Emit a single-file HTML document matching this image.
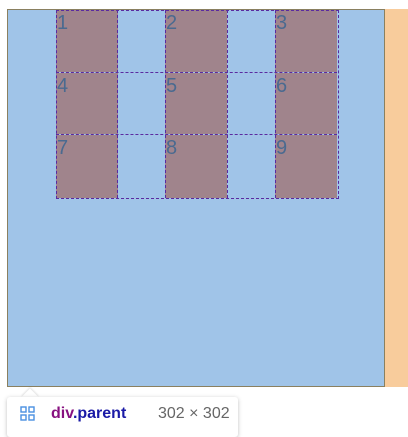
<html><head><style>
body{margin:0;width:408px;height:430px;background:#fff;position:relative;overflow:hidden;font-family:"Liberation Sans","DejaVu Sans",sans-serif}
.p{position:absolute;left:7px;top:9px;width:376px;height:376px;border:1px solid #8a8060;background:#a0c4e8}
.m{position:absolute;left:385px;top:9px;width:23px;height:378px;background:#f8cc9c}
.c{position:absolute;background:#a0848c;color:#4a6a90;font-size:20px;line-height:26px;padding-left:1px;box-sizing:border-box}
.l{position:absolute;border:0 dashed #5a2aa0}
.tip{position:absolute;left:7px;top:397px;width:231px;height:40px;background:#fff;border-radius:3px;box-shadow:0 1px 4px rgba(0,0,0,.25)}
.arr{position:absolute;left:24px;top:391px;width:12px;height:12px;background:#fff;transform:rotate(45deg);box-shadow:-1px -1px 2px rgba(0,0,0,.12)}
</style></head><body>
<div class="p"></div><div class="m"></div>
<div class="c" style="left:56px;top:10px;width:62px;height:62px">1</div>
<div class="c" style="left:165px;top:10px;width:62px;height:62px">2</div>
<div class="c" style="left:275px;top:10px;width:62px;height:62px">3</div>
<div class="c" style="left:56px;top:73px;width:62px;height:61px">4</div>
<div class="c" style="left:165px;top:73px;width:62px;height:61px">5</div>
<div class="c" style="left:275px;top:73px;width:62px;height:61px">6</div>
<div class="c" style="left:56px;top:135px;width:62px;height:63px">7</div>
<div class="c" style="left:165px;top:135px;width:62px;height:63px">8</div>
<div class="c" style="left:275px;top:135px;width:62px;height:63px">9</div>
<div class="l" style="left:56px;top:10px;width:281px;height:187px;border-width:1px"></div>
<div class="l" style="left:56px;top:72px;width:281px;border-top-width:1px"></div>
<div class="l" style="left:56px;top:134px;width:281px;border-top-width:1px"></div>
<div class="l" style="left:117px;top:10px;height:188px;border-left-width:1px"></div>
<div class="l" style="left:165px;top:10px;height:188px;border-left-width:1px"></div>
<div class="l" style="left:227px;top:10px;height:188px;border-left-width:1px"></div>
<div class="l" style="left:275px;top:10px;height:188px;border-left-width:1px"></div>
<div class="arr"></div><div class="tip"></div>
<svg style="position:absolute;left:20px;top:406px" width="16" height="16"><g fill="none" stroke="#4a90e2" stroke-width="1.4"><rect x="1" y="1" width="5" height="5"/><rect x="9" y="1" width="5" height="5"/><rect x="1" y="9" width="5" height="5"/><rect x="9" y="9" width="5" height="5"/></g></svg>
<div style="position:absolute;left:51px;top:405px;font-size:16px;font-weight:bold;color:#881280">div<span style="color:#1a1aa6">.parent</span></div>
<div style="position:absolute;left:158px;top:405px;font-size:16px;color:#666">302 × 302</div>
</body></html>
